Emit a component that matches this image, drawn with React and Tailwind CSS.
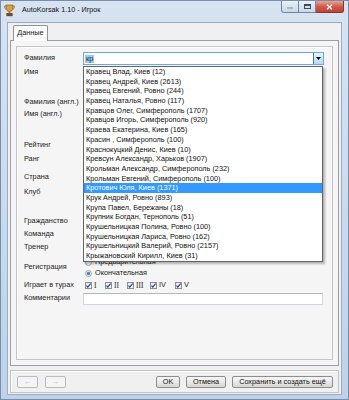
import React from "react";

const items = [
  "Кравец Влад, Киев (12)",
  "Кравец Андрей, Киев (2613)",
  "Кравец Евгений, Ровно (244)",
  "Кравец Наталья, Ровно (117)",
  "Кравцов Олег, Симферополь (1707)",
  "Кравцов Игорь, Симферополь (920)",
  "Краева Екатерина, Киев (165)",
  "Красин , Симферополь (100)",
  "Краснокуцкий Денис, Киев (10)",
  "Кревсун Александр, Харьков (1907)",
  "Крольман Александр, Симферополь (232)",
  "Крольман Евгений, Симферополь (100)",
  "Кротович Юля, Киев (1371)",
  "Крук Андрей, Ровно (893)",
  "Крупа Павел, Бережаны (18)",
  "Крупник Богдан, Тернополь (51)",
  "Крушельницкая Полина, Ровно (100)",
  "Крушельницкая Лариса, Ровно (162)",
  "Крушельницкий Валерий, Ровно (2157)",
  "Крыжановский Кирилл, Киев (31)",
];

function Trophy() {
  return (
    <svg width="11" height="13" viewBox="0 0 11 13">
      <path d="M2 1h7v3c0 2-1.5 3.5-3.5 3.5S2 6 2 4z" fill="#d9a23a" stroke="#8a5a1a" strokeWidth="0.7" />
      <path d="M2 2H0.6v1.2C0.6 4.5 1.5 5 2.5 5.2M9 2h1.4v1.2C10.4 4.5 9.5 5 8.5 5.2" fill="none" stroke="#9a6a22" strokeWidth="0.8" />
      <rect x="4.6" y="7.3" width="1.8" height="2" fill="#b27a2a" />
      <rect x="2.8" y="9.3" width="5.4" height="2.6" fill="#7a4a1c" stroke="#4e2c0e" strokeWidth="0.5" />
    </svg>
  );
}

function Check() {
  return (
    <span className="w-[7px] h-[7px] border border-[#8e8f8f] bg-gradient-to-br from-[#dfe9f5] to-[#f7fbff] flex items-center justify-center shrink-0">
      <svg width="5" height="5" viewBox="0 0 5 5">
        <path d="M0.5 2.6l1.3 1.6L4.6 0.5" fill="none" stroke="#2a3f9a" strokeWidth="1.1" />
      </svg>
    </span>
  );
}

function Radio({ on }) {
  return (
    <svg width="7" height="7" viewBox="0 0 7 7" className="shrink-0">
      <circle cx="3.5" cy="3.5" r="3" fill="#f2f4f7" stroke="#8e8f8f" strokeWidth="0.8" />
      {on && <circle cx="3.5" cy="3.5" r="1.7" fill="#3b8ac4" />}
    </svg>
  );
}

function Btn({ w, children, disabled }) {
  return (
    <div
      className={
        "h-[12px] rounded-[2px] border flex items-center justify-center leading-none " +
        w +
        (disabled
          ? " border-[#b9bcbf] bg-[#f4f4f4] text-[#b0b0b0]"
          : " border-[#8d8d8d] bg-gradient-to-b from-[#f6f6f6] via-[#e9e9e9] to-[#d6d6d6] text-[#111]")
      }
    >
      {children}
    </div>
  );
}

export default function App() {
  return (
    <div className="w-[349px] h-[400px] flex flex-col bg-gradient-to-b from-[#d7e3f1] to-[#bfd2ea] border border-[#7a8ea9] font-['Liberation_Sans',Arial,sans-serif] text-[7.3px] text-[#1b1b1b] overflow-hidden">
      {/* title bar */}
      <div className="h-[21px] shrink-0 flex items-start">
        <div className="h-[19px] flex items-center pl-[3px] gap-[7px]">
          <Trophy />
          <span className="text-[7.2px] text-[#101010]">AutoKorsak 1.10 - Игрок</span>
        </div>
        <div className="ml-auto mr-[4px] flex">
          <div className="w-[18px] h-[12px] border border-t-0 border-[#7286a1] rounded-bl-[3px] bg-gradient-to-b from-[#e9f0f8] to-[#c9d8ea] flex items-end justify-center pb-[3px]">
            <div className="w-[6px] h-[2px] bg-[#3b4a5e] border border-white/60" />
          </div>
          <div className="w-[17px] h-[12px] border border-t-0 border-l-0 border-[#7286a1] bg-gradient-to-b from-[#e9f0f8] to-[#c9d8ea] flex items-center justify-center">
            <div className="w-[7px] h-[5px] border border-[#3b4a5e] border-t-2" />
          </div>
          <div className="w-[28px] h-[12px] border border-t-0 border-l-0 border-[#7a3a35] rounded-br-[3px] bg-gradient-to-b from-[#e7a596] via-[#d25a48] to-[#c2402e] flex items-center justify-center">
            <svg width="7" height="6" viewBox="0 0 7 6">
              <path d="M1 0.8l5 4.4M6 0.8l-5 4.4" stroke="#fff" strokeWidth="1.5" />
            </svg>
          </div>
        </div>
      </div>

      {/* client area */}
      <div className="flex-1 mx-[6px] mb-[4px] bg-[#f0f0f0] border border-[#9aadc6] flex flex-col px-[2px] pt-[2px]">
        {/* tab strip */}
        <div className="h-[15px] shrink-0 flex items-end pl-[3px] relative z-10">
          <div className="w-[35px] h-[16px] -mb-px border border-b-0 border-[#8f939b] rounded-t-[2px] bg-[#fbfbfb] flex items-center justify-center">
            Данные
          </div>
        </div>

        {/* tab panel */}
        <div className="h-[326px] shrink-0 border border-[#9a9ea6] bg-[#f5f5f5] p-[5px]">
          <div className="h-full border border-[#c5c5c5] shadow-[inset_1px_1px_0_#ffffff] pl-[7px] pr-[8px] pt-[5px] flex flex-col">
            {/* Фамилия */}
            <div className="h-[13px] flex items-center">
              <div className="w-[59px] shrink-0">Фамилия</div>
              <div className="flex-1 h-[13px] relative">
                <div className="h-full border border-[#6fa8e0] bg-white flex items-center">
                  <span className="ml-[1px] px-[1px] bg-[#99c9ef] text-[#10335f] leading-[8px]">кр</span>
                  <div className="ml-auto w-[10px] h-full border-l border-[#3c7fb1] bg-gradient-to-b from-[#e5f4fc] to-[#b4daf3] flex items-center justify-center">
                    <svg width="5" height="3" viewBox="0 0 5 3">
                      <path d="M0 0h5L2.5 3z" fill="#000" />
                    </svg>
                  </div>
                </div>
                {/* dropdown list */}
                <div className="absolute left-0 top-[14px] w-[240px] border border-[#646464] bg-white shadow-[2px_2px_2px_rgba(0,0,0,0.28)] z-20">
                  {items.map((t, i) => (
                    <div
                      key={t}
                      className={
                        "h-[9.7px] leading-[9.7px] pl-[2px] whitespace-nowrap " +
                        (i === 12 ? "bg-[#3399ff] text-white" : "text-[#111]")
                      }
                    >
                      {t}
                    </div>
                  ))}
                </div>
              </div>
            </div>
            <div className="h-[12px] mt-[1.7px] flex items-center">Имя</div>
            <div className="h-[12px] mt-[18px] flex items-center">Фамилия (англ.)</div>
            <div className="h-[12px] flex items-center">Имя (англ.)</div>
            <div className="h-[12px] mt-[18.6px] flex items-center">Рейтинг</div>
            <div className="h-[12px] mt-[2px] flex items-center">Ранг</div>
            <div className="h-[12px] mt-[6.4px] flex items-center">Страна</div>
            <div className="h-[12px] mt-[3px] flex items-center">Клуб</div>
            <div className="h-[12px] mt-[17px] flex items-center">Гражданство</div>
            <div className="h-[12px] mt-[0.6px] flex items-center">Команда</div>
            <div className="h-[12px] mt-[1.4px] flex items-center">Тренер</div>
            {/* Регистрация */}
            <div className="h-[22px] mt-[3.3px] flex items-center">
              <div className="w-[59px] shrink-0">Регистрация</div>
              <div className="flex flex-col pl-[2px]">
                <div className="h-[11px] flex items-center gap-[3px]">
                  <Radio />
                  <span>Предварительная</span>
                </div>
                <div className="h-[11px] flex items-center gap-[3px]">
                  <Radio on />
                  <span>Окончательная</span>
                </div>
              </div>
            </div>
            {/* Играет в турах */}
            <div className="h-[12px] mt-[1px] flex items-center">
              <div className="w-[59px] shrink-0">Играет в турах</div>
              <div className="flex items-center pl-[2px]">
                <div className="w-[20px] flex items-center gap-[2px]">
                  <Check />
                  <span className="font-['Liberation_Serif',serif] text-[7.5px]">I</span>
                </div>
                <div className="w-[22px] flex items-center gap-[2px]">
                  <Check />
                  <span className="font-['Liberation_Serif',serif] text-[7.5px]">II</span>
                </div>
                <div className="w-[23px] flex items-center gap-[2px]">
                  <Check />
                  <span className="font-['Liberation_Serif',serif] text-[7.5px]">III</span>
                </div>
                <div className="w-[25px] flex items-center gap-[2px]">
                  <Check />
                  <span>IV</span>
                </div>
                <div className="flex items-center gap-[2px]">
                  <Check />
                  <span>V</span>
                </div>
              </div>
            </div>
            {/* Комментарии */}
            <div className="h-[12px] mt-[1px] flex items-center">
              <div className="w-[59px] shrink-0">Комментарии</div>
              <div className="w-[240px] h-[12px] border border-[#d3d7dc] border-t-[#b3b7bd] bg-white" />
            </div>
          </div>
        </div>

        {/* button bar */}
        <div className="h-[23px] shrink-0 mt-[4px] border border-[#c2c2c2] shadow-[inset_1px_1px_0_#ffffff] flex items-center pl-[6px] pr-[5px]">
          <Btn w="w-[21px]" disabled>←</Btn>
          <div className="w-[7px]" />
          <Btn w="w-[21px]" disabled>→</Btn>
          <div className="ml-auto flex gap-[6px]">
            <Btn w="w-[24px]">OK</Btn>
            <Btn w="w-[40px]">Отмена</Btn>
            <Btn w="w-[101px]">Сохранить и создать ещё</Btn>
          </div>
        </div>
      </div>
    </div>
  );
}
